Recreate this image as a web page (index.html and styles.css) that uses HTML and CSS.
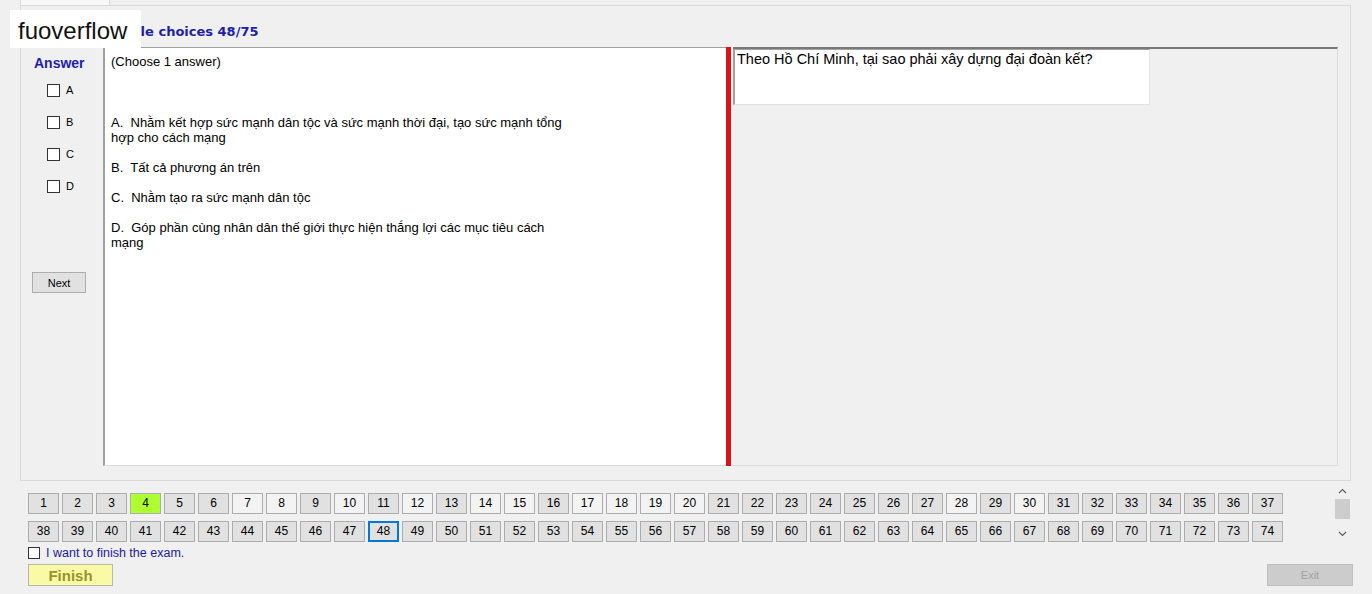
FILE: index.html
```html
<!DOCTYPE html>
<html lang="vi">
<head>
    <meta charset="UTF-8">
    <title>Multiple choices</title>
    <link rel="stylesheet" href="styles.css">
</head>
<body>
    <div class="tabs"><div class="tab"></div></div>

    <div class="page">
        <div class="title">Multiple choices 48/75</div>
        <div class="main">
            <div class="answer-col">
                <div class="answer-title">Answer</div>
                <div class="choice"><span class="box"></span>A</div>
                <div class="choice"><span class="box"></span>B</div>
                <div class="choice"><span class="box"></span>C</div>
                <div class="choice"><span class="box"></span>D</div>
                <button class="btn next-btn">Next</button>
            </div>
            <div class="content-box">
                <p class="choose">(Choose 1 answer)</p>
                <p class="option first">A.&nbsp; Nhằm kết hợp sức mạnh dân tộc và sức mạnh thời đại, tạo sức mạnh tổng<br>hợp cho cách mạng</p>
                <p class="option">B.&nbsp; Tất cả phương án trên</p>
                <p class="option">C.&nbsp; Nhằm tạo ra sức mạnh dân tộc</p>
                <p class="option">D.&nbsp; Góp phần cùng nhân dân thế giới thực hiện thắng lợi các mục tiêu cách<br>mạng</p>
            </div>
            <div class="splitter"></div>
            <div class="question-pane">
                <div class="question-box">Theo Hồ Chí Minh, tại sao phải xây dựng đại đoàn kết?</div>
            </div>
        </div>
    </div>

    <div class="nav">
        <div class="nav-grid">
            <span class="nav-btn">1</span>
            <span class="nav-btn">2</span>
            <span class="nav-btn">3</span>
            <span class="nav-btn current">4</span>
            <span class="nav-btn">5</span>
            <span class="nav-btn">6</span>
            <span class="nav-btn light">7</span>
            <span class="nav-btn light">8</span>
            <span class="nav-btn">9</span>
            <span class="nav-btn light">10</span>
            <span class="nav-btn">11</span>
            <span class="nav-btn light">12</span>
            <span class="nav-btn">13</span>
            <span class="nav-btn light">14</span>
            <span class="nav-btn light">15</span>
            <span class="nav-btn">16</span>
            <span class="nav-btn light">17</span>
            <span class="nav-btn light">18</span>
            <span class="nav-btn light">19</span>
            <span class="nav-btn light">20</span>
            <span class="nav-btn">21</span>
            <span class="nav-btn">22</span>
            <span class="nav-btn">23</span>
            <span class="nav-btn">24</span>
            <span class="nav-btn">25</span>
            <span class="nav-btn">26</span>
            <span class="nav-btn">27</span>
            <span class="nav-btn light">28</span>
            <span class="nav-btn">29</span>
            <span class="nav-btn light">30</span>
            <span class="nav-btn">31</span>
            <span class="nav-btn">32</span>
            <span class="nav-btn">33</span>
            <span class="nav-btn">34</span>
            <span class="nav-btn">35</span>
            <span class="nav-btn">36</span>
            <span class="nav-btn">37</span>
            <span class="nav-btn">38</span>
            <span class="nav-btn">39</span>
            <span class="nav-btn">40</span>
            <span class="nav-btn">41</span>
            <span class="nav-btn">42</span>
            <span class="nav-btn">43</span>
            <span class="nav-btn">44</span>
            <span class="nav-btn">45</span>
            <span class="nav-btn">46</span>
            <span class="nav-btn">47</span>
            <span class="nav-btn focused">48</span>
            <span class="nav-btn">49</span>
            <span class="nav-btn">50</span>
            <span class="nav-btn">51</span>
            <span class="nav-btn">52</span>
            <span class="nav-btn">53</span>
            <span class="nav-btn">54</span>
            <span class="nav-btn">55</span>
            <span class="nav-btn">56</span>
            <span class="nav-btn">57</span>
            <span class="nav-btn">58</span>
            <span class="nav-btn">59</span>
            <span class="nav-btn">60</span>
            <span class="nav-btn">61</span>
            <span class="nav-btn">62</span>
            <span class="nav-btn">63</span>
            <span class="nav-btn">64</span>
            <span class="nav-btn">65</span>
            <span class="nav-btn">66</span>
            <span class="nav-btn">67</span>
            <span class="nav-btn">68</span>
            <span class="nav-btn">69</span>
            <span class="nav-btn">70</span>
            <span class="nav-btn">71</span>
            <span class="nav-btn">72</span>
            <span class="nav-btn">73</span>
            <span class="nav-btn">74</span>
        </div>
        <div class="scrollbar">
            <svg class="arrow" width="9" height="6" viewBox="0 0 9 6"><path d="M1 5 L4.5 1.5 L8 5" fill="none" stroke="#606060" stroke-width="1.2"/></svg>
            <div class="thumb"></div>
            <svg class="arrow down" width="9" height="6" viewBox="0 0 9 6"><path d="M1 1 L4.5 4.5 L8 1" fill="none" stroke="#606060" stroke-width="1.2"/></svg>
        </div>
    </div>

    <div class="finish-check"><span class="box small"></span>I want to finish the exam.</div>

    <div class="bottom">
        <button class="btn finish-btn">Finish</button>
        <button class="btn exit-btn">Exit</button>
    </div>

    <div class="watermark">fuoverflow</div>
</body>
</html>
```

FILE: styles.css
```css
body {
    margin: 0;
    width: 1372px;
    height: 594px;
    overflow: hidden;
    position: relative;
    font-family: "Liberation Sans", Arial, sans-serif;
    font-size: 12px;
    color: #000;
    background-color: #f0f0f0;
}
.tabs {
    height: 5px;
    padding-left: 20px;
}
.tab {
    width: 90px;
    height: 5px;
    box-sizing: border-box;
    border-left: 1px solid #d9d9d9;
    border-right: 1px solid #d9d9d9;
    background: #f8f8f8;
}
.page {
    margin-left: 20px;
    width: 1331px;
    height: 476px;
    box-sizing: border-box;
    border: 1px solid #dadada;
}
.title {
    height: 41px;
    box-sizing: border-box;
    padding: 18px 0 0 73px;
    font-family: "DejaVu Sans", Verdana, sans-serif;
    font-size: 13px;
    font-weight: bold;
    line-height: 16px;
    color: #1e1eaa;
}
.main {
    display: flex;
    height: 419px;
}
.answer-col {
    width: 82px;
    box-sizing: border-box;
    padding: 8px 0 0 11px;
}
.answer-title {
    margin-left: 2px;
    font-size: 14px;
    font-weight: bold;
    line-height: 16px;
    color: #1e1eaa;
}
.answer-title + .choice {
    margin-top: 3px;
}
.choice {
    display: flex;
    align-items: center;
    gap: 6px;
    height: 32px;
    margin-left: 15px;
    font-size: 11px;
}
.box {
    width: 13px;
    height: 13px;
    box-sizing: border-box;
    border: 1px solid #333;
    background: #fff;
}
.box.small {
    width: 12px;
    height: 12px;
}
.btn {
    display: block;
    box-sizing: border-box;
    padding: 0;
    font-family: "Liberation Sans", Arial, sans-serif;
    font-size: 12px;
    border: 1px solid #adadad;
    background: #e1e1e1;
}
.next-btn {
    width: 54px;
    height: 21px;
    margin-top: 70px;
    font-size: 11px;
}
.content-box {
    width: 623px;
    box-sizing: border-box;
    padding: 6px;
    border-left: 2px solid #a0a0a0;
    border-top: 1px solid #a0a0a0;
    border-bottom: 1px solid #dcdcdc;
    background: #fff;
    font-size: 13px;
    line-height: 15px;
}
.content-box p {
    margin: 0;
}
.content-box .option {
    margin-top: 15px;
}
.content-box .option.first {
    margin-top: 46px;
}
.splitter {
    width: 5px;
    margin-right: 2px;
    background: #d7141a;
}
.question-pane {
    width: 605px;
    box-sizing: border-box;
    border-top: 2px solid #7a7a7a;
    border-right: 1px solid #dcdcdc;
    border-bottom: 1px solid #dcdcdc;
}
.question-box {
    width: 417px;
    height: 56px;
    box-sizing: border-box;
    padding: 1px 0 0 2px;
    border-left: 2px solid #a0a0a0;
    border-top: 1px solid #a0a0a0;
    border-right: 1px solid #e3e3e3;
    border-bottom: 1px solid #e3e3e3;
    background: #fff;
    font-size: 14.5px;
    line-height: 16px;
}
.nav {
    display: flex;
    justify-content: space-between;
    margin-top: 12px;
    padding: 0 22px 0 28px;
}
.nav-grid {
    display: grid;
    grid-template-columns: repeat(37, 31px);
    gap: 7px 3px;
}
.nav-btn {
    height: 21px;
    box-sizing: border-box;
    border: 1px solid #adadad;
    background: #e1e1e1;
    text-align: center;
    line-height: 19px;
}
.nav-btn.light {
    background: #f3f3f3;
}
.nav-btn.current {
    background: #adff2f;
}
.nav-btn.focused {
    border: 2px solid #0078d7;
    line-height: 17px;
}
.scrollbar {
    width: 16px;
    margin-top: -8px;
    display: flex;
    flex-direction: column;
    align-items: center;
}
.scrollbar .arrow {
    margin-top: 3px;
}
.scrollbar .thumb {
    width: 15px;
    height: 20px;
    margin-top: 5px;
    background: #cdcdcd;
}
.scrollbar .arrow.down {
    margin-top: 12px;
}
.finish-check {
    display: flex;
    align-items: center;
    gap: 6px;
    height: 15px;
    margin-top: 3px;
    padding-left: 28px;
    font-size: 12.5px;
    color: #1a1aa0;
}
.bottom {
    display: flex;
    justify-content: space-between;
    margin-top: 4px;
    padding: 0 19px 0 28px;
}
.finish-btn {
    width: 85px;
    height: 22px;
    border-color: #b9b9a8;
    background: #fafaa6;
    color: #96942a;
    font-size: 15px;
    font-weight: bold;
}
.exit-btn {
    width: 86px;
    height: 22px;
    border-color: #bfbfbf;
    background: #cccccc;
    color: #a3a3a3;
    font-size: 11px;
}
.watermark {
    position: absolute;
    left: 10px;
    top: 10px;
    width: 131px;
    height: 38px;
    box-sizing: border-box;
    padding-left: 8px;
    background: #fff;
    font-size: 24px;
    line-height: 42px;
    color: #111;
}
```
